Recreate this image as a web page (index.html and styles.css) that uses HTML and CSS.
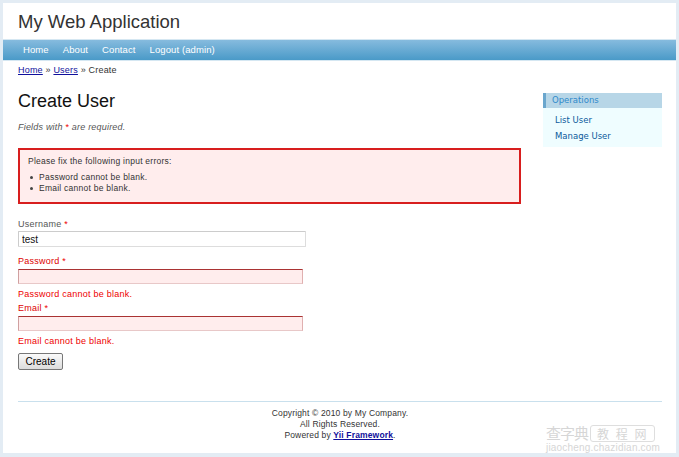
FILE: index.html
```html
<!DOCTYPE html>
<html lang="en">
<head>
    <meta charset="UTF-8">
    <title>My Web Application - Create User</title>
    <link rel="stylesheet" href="styles.css">
</head>
<body>
    <div class="page">
        <div class="header">
            <div class="logo">My Web Application</div>
        </div>

        <div class="mainmenu">
            <ul>
                <li><a href="#">Home</a></li>
                <li><a href="#">About</a></li>
                <li><a href="#">Contact</a></li>
                <li><a href="#">Logout (admin)</a></li>
            </ul>
        </div>

        <div class="breadcrumbs">
            <a href="#">Home</a> &raquo; <a href="#">Users</a> &raquo; <span>Create</span>
        </div>

        <div class="columns">
            <div class="content">
                <h1>Create User</h1>

                <div class="form">
                    <p class="note">Fields with <span class="required">*</span> are required.</p>

                    <div class="errorSummary">
                        <p>Please fix the following input errors:</p>
                        <ul>
                            <li>Password cannot be blank.</li>
                            <li>Email cannot be blank.</li>
                        </ul>
                    </div>

                    <div class="row first">
                        <label>Username <span class="required">*</span></label>
                        <input type="text" class="wide" value="test">
                    </div>

                    <div class="row">
                        <label class="error">Password <span class="required">*</span></label>
                        <input type="password" class="error">
                        <div class="errorMessage">Password cannot be blank.</div>
                    </div>

                    <div class="row after-error">
                        <label class="error">Email <span class="required">*</span></label>
                        <input type="text" class="error">
                        <div class="errorMessage">Email cannot be blank.</div>
                    </div>

                    <div class="row buttons">
                        <button type="submit">Create</button>
                    </div>
                </div>
            </div>

            <div class="sidebar">
                <div class="portlet">
                    <div class="portlet-decoration">Operations</div>
                    <ul class="operations">
                        <li><a href="#">List User</a></li>
                        <li><a href="#">Manage User</a></li>
                    </ul>
                </div>
            </div>
        </div>

        <div class="footer">
            Copyright &copy; 2010 by My Company.<br>
            All Rights Reserved.<br>
            Powered by <a href="#">Yii Framework</a>.
        </div>
    </div>

    <div class="watermark">
        <div class="wm-top"><span class="wm-big">查字典</span><span class="wm-box">教 程 网</span></div>
        <div class="wm-url">jiaocheng.chazidian.com</div>
    </div>
</body>
</html>
```

FILE: styles.css
```css
html, body {
    margin: 0;
    padding: 0;
}
body {
    background-color: #e3ecf4;
    font-family: "Liberation Sans", Arial, sans-serif;
    color: #555;
    padding: 3px 3px 0 3px;
}
.page {
    width: 673px;
    height: 450px;
    background: white;
    position: relative;
}
.header {
    height: 36px;
    padding: 8px 0 0 15px;
    box-sizing: border-box;
}
.logo {
    font-size: 18.5px;
    line-height: 22px;
    color: #333;
}
.mainmenu {
    border-top: 1px solid #d5e7f2;
    border-bottom: 1px solid #d5e7f2;
    background: linear-gradient(#86bbde, #4a9ac8);
}
.mainmenu ul {
    list-style: none;
    margin: 0;
    padding: 0 0 0 13px;
    display: flex;
}
.mainmenu li a {
    display: block;
    padding: 0 7px;
    line-height: 20px;
    font-size: 9.5px;
    color: white;
    text-decoration: none;
    letter-spacing: 0.1px;
}
.breadcrumbs {
    padding: 2px 15px 0 15px;
    font-size: 9px;
    line-height: 14px;
    color: #333;
    letter-spacing: 0.2px;
}
.breadcrumbs a, .footer a {
    color: #10109c;
}
.columns {
    display: flex;
    padding: 0 14px 0 15px;
    gap: 22px;
}
.content {
    width: 503px;
}
.sidebar {
    width: 119px;
    margin-top: 16px;
}
h1 {
    margin: 13px 0 0 0;
    font-size: 18px;
    line-height: 22px;
    font-weight: normal;
    color: #111;
}
.note {
    margin: 9px 0 0 0;
    font-size: 9px;
    line-height: 12px;
    font-style: italic;
    letter-spacing: 0.2px;
}
.required {
    color: #e00;
    font-style: normal;
}
.errorSummary {
    margin-top: 15px;
    border: 2px solid #d81e1e;
    background: #ffeded;
    padding: 6px 8px 7px 8px;
    height: 56px;
    box-sizing: border-box;
    font-size: 8.5px;
    line-height: 11px;
    color: #333;
    letter-spacing: 0.25px;
}
.errorSummary p {
    margin: 0 0 5px 0;
}
.errorSummary ul {
    margin: 0;
    padding: 0 0 0 11px;
}
.errorSummary li {
    list-style: none;
    position: relative;
}
.errorSummary li::before {
    content: "";
    position: absolute;
    left: -9px;
    top: 4px;
    width: 3px;
    height: 3px;
    border-radius: 50%;
    background: #444;
}
.row label {
    display: block;
    font-size: 9px;
    line-height: 11px;
    letter-spacing: 0.25px;
    color: #555;
}
.row label.error {
    color: #d00;
}
.row.first {
    margin-top: 15px;
}
.row input {
    display: block;
    box-sizing: border-box;
    width: 285px;
    height: 15px;
    margin: 1px 0 0 0;
    padding: 0 3px;
    font-family: "Liberation Sans", Arial, sans-serif;
    font-size: 10px;
    color: #111;
    border: 1px solid #d8d8d8;
    outline: none;
}
.row input.wide {
    width: 288px;
    height: 16px;
    border-color: #ccc #ddd #ddd #ccc;
    border-radius: 1px;
}
.row + .row {
    margin-top: 9px;
}
.row.after-error {
    margin-top: 3px;
}
.row input.error {
    background: #ffeded;
    border-color: #a33 #e0b0b0 #e8c8c8 #d0a0a0;
    margin-top: 2px;
}
.errorMessage {
    margin-top: 5px;
    font-size: 9px;
    line-height: 11px;
    color: #e00;
    letter-spacing: 0.25px;
}
.row.buttons {
    margin-top: 6px;
}
button {
    display: block;
    width: 45px;
    height: 17px;
    padding: 0;
    font-family: "Liberation Sans", Arial, sans-serif;
    font-size: 10px;
    color: #000;
    background: linear-gradient(#fafafa, #dcdcdc);
    border: 1px solid #777;
    border-radius: 2px;
}
.portlet {
    background: #effdff;
    height: 54px;
}
.portlet-decoration {
    background: #b7d6e7;
    border-left: 3px solid #6aa6cd;
    padding-left: 6px;
    line-height: 15px;
    font-family: "DejaVu Sans", Verdana, sans-serif;
    font-size: 8.5px;
    color: #2f8acb;
}
.operations {
    list-style: none;
    margin: 0;
    padding: 4px 0 0 12px;
    font-family: "DejaVu Sans", Verdana, sans-serif;
    font-size: 8.5px;
    line-height: 16px;
}
.operations a {
    color: #0c5a9c;
    text-decoration: none;
}
.footer {
    margin: 31px 14px 0 15px;
    border-top: 1px solid #c9e0ed;
    padding-top: 6px;
    text-align: center;
    font-size: 8.5px;
    line-height: 11px;
    color: #333;
    letter-spacing: 0.15px;
}
.footer a {
    font-weight: bold;
}
.watermark {
    position: absolute;
    left: 546px;
    top: 424px;
    color: #d6d6d6;
    font-family: "Noto Sans CJK SC", sans-serif;
}
.wm-top {
    display: flex;
    align-items: center;
    gap: 2px;
    line-height: 18px;
}
.wm-big {
    font-size: 15px;
    letter-spacing: -1px;
}
.wm-box {
    font-size: 12px;
    line-height: 15px;
    padding: 0 6px;
    border: 1px solid #dedede;
    border-radius: 3px;
    letter-spacing: 2px;
}
.wm-url {
    font-family: "Liberation Sans", Arial, sans-serif;
    font-size: 10px;
    line-height: 11px;
    letter-spacing: 0.2px;
}
```
